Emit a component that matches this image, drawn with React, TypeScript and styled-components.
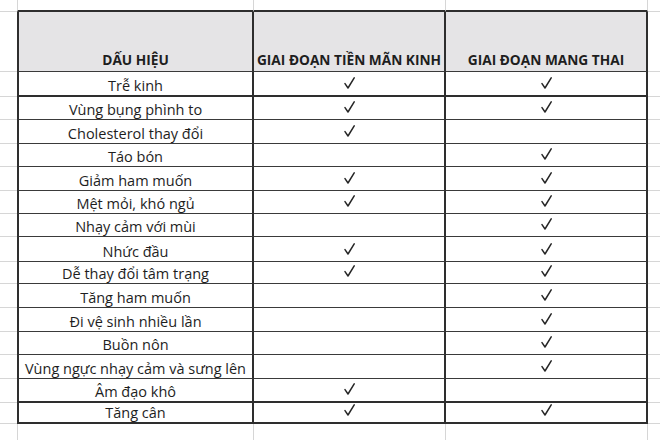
import React from "react";
import styled, { createGlobalStyle, css } from "styled-components";

const GlobalStyle = createGlobalStyle`
  html, body { margin: 0; padding: 0; background: #ffffff; }
  body { font-family: "Open Sans", "Noto Sans", sans-serif; }
`;

type Edge = "none" | "light" | "thin" | "thick";

const edge = (side: string, kind: Edge) => {
  switch (kind) {
    case "light":
      return css`border-${side}: 1px solid #d6d6d6;`;
    case "thin":
      return css`border-${side}: 1px solid #3a3a3a;`;
    case "thick":
      return css`border-${side}: 2px solid #2e2e2e;`;
    default:
      return css``;
  }
};

const ROW_HEIGHTS = [12, 60, 25, 23, 24, 23, 24, 23, 23, 25, 22, 24, 24, 23, 24, 24, 21, 16];

const Sheet = styled.div`
  display: grid;
  width: 660px;
  height: 440px;
  overflow: hidden;
  grid-template-columns: 17px 237px 192px 202px 12px;
  grid-template-rows: ${ROW_HEIGHTS.map((h) => `${h}px`).join(" ")};
  background: #ffffff;
`;

const Cell = styled.div<{ $l?: Edge; $r?: Edge; $b?: Edge; $head?: boolean }>`
  box-sizing: border-box;
  min-width: 0;
  display: flex;
  align-items: flex-end;
  justify-content: center;
  color: #1e1e1e;
  font-family: "Open Sans", "Noto Sans", sans-serif;
  font-size: 14.5px;
  letter-spacing: 0;
  line-height: 17px;
  white-space: nowrap;
  padding-bottom: 1px;
  ${(p) => edge("left", p.$l ?? "none")}
  ${(p) => edge("right", p.$r ?? "none")}
  ${(p) => edge("bottom", p.$b ?? "none")}
  ${(p) =>
    p.$head &&
    css`
      background: #e5e4e6;
      font-weight: 700;
      font-size: 13.7px;
      padding-bottom: 3px;
    `}
`;

const CheckIcon = styled.svg`
  display: block;
  width: 11px;
  height: 12px;
  margin-bottom: 5px;
`;

const Check = () => (
  <CheckIcon viewBox="0 0 11 12">
    <path
      d="M1 6.6 L4 11 L10.2 0.8"
      fill="none"
      stroke="#262626"
      strokeWidth="1.5"
      strokeLinecap="round"
      strokeLinejoin="round"
    />
  </CheckIcon>
);

type Row = { label: string; pre: boolean; preg: boolean; bottom: Edge };

const ROWS: Row[] = [
  { label: "Trễ kinh", pre: true, preg: true, bottom: "thick" },
  { label: "Vùng bụng phình to", pre: true, preg: true, bottom: "thin" },
  { label: "Cholesterol thay đổi", pre: true, preg: false, bottom: "thin" },
  { label: "Táo bón", pre: false, preg: true, bottom: "thin" },
  { label: "Giảm ham muốn", pre: true, preg: true, bottom: "thin" },
  { label: "Mệt mỏi, khó ngủ", pre: true, preg: true, bottom: "thin" },
  { label: "Nhạy cảm với mùi", pre: false, preg: true, bottom: "thin" },
  { label: "Nhức đầu", pre: true, preg: true, bottom: "thin" },
  { label: "Dễ thay đổi tâm trạng", pre: true, preg: true, bottom: "thin" },
  { label: "Tăng ham muốn", pre: false, preg: true, bottom: "thin" },
  { label: "Đi vệ sinh nhiều lần", pre: false, preg: true, bottom: "thin" },
  { label: "Buồn nôn", pre: false, preg: true, bottom: "thin" },
  { label: "Vùng ngực nhạy cảm và sưng lên", pre: false, preg: true, bottom: "thin" },
  { label: "Âm đạo khô", pre: true, preg: false, bottom: "thick" },
  { label: "Tăng cân", pre: true, preg: true, bottom: "thick" },
];

export default function App() {
  return (
    <>
      <GlobalStyle />
      <Sheet>
        {/* top margin row */}
        <Cell $b="light" />
        <Cell $l="light" $r="light" $b="thick" />
        <Cell $r="light" $b="thick" />
        <Cell $r="light" $b="thick" />
        <Cell $b="light" />

        {/* header */}
        <Cell $b="light" />
        <Cell $head $l="thick" $r="thick" $b="thin">DẤU HIỆU</Cell>
        <Cell $head $r="thick" $b="thin">GIAI ĐOẠN TIỀN MÃN KINH</Cell>
        <Cell $head $r="thick" $b="thin">GIAI ĐOẠN MANG THAI</Cell>
        <Cell $b="light" />

        {ROWS.map((r) => (
          <React.Fragment key={r.label}>
            <Cell $b="light" />
            <Cell $l="thick" $r="thick" $b={r.bottom}>{r.label}</Cell>
            <Cell $r="thick" $b={r.bottom}>{r.pre && <Check />}</Cell>
            <Cell $r="thick" $b={r.bottom}>{r.preg && <Check />}</Cell>
            <Cell $b="light" />
          </React.Fragment>
        ))}

        {/* bottom margin row */}
        <Cell />
        <Cell $l="light" $r="light" />
        <Cell $r="light" />
        <Cell $r="light" />
        <Cell />
      </Sheet>
    </>
  );
}
